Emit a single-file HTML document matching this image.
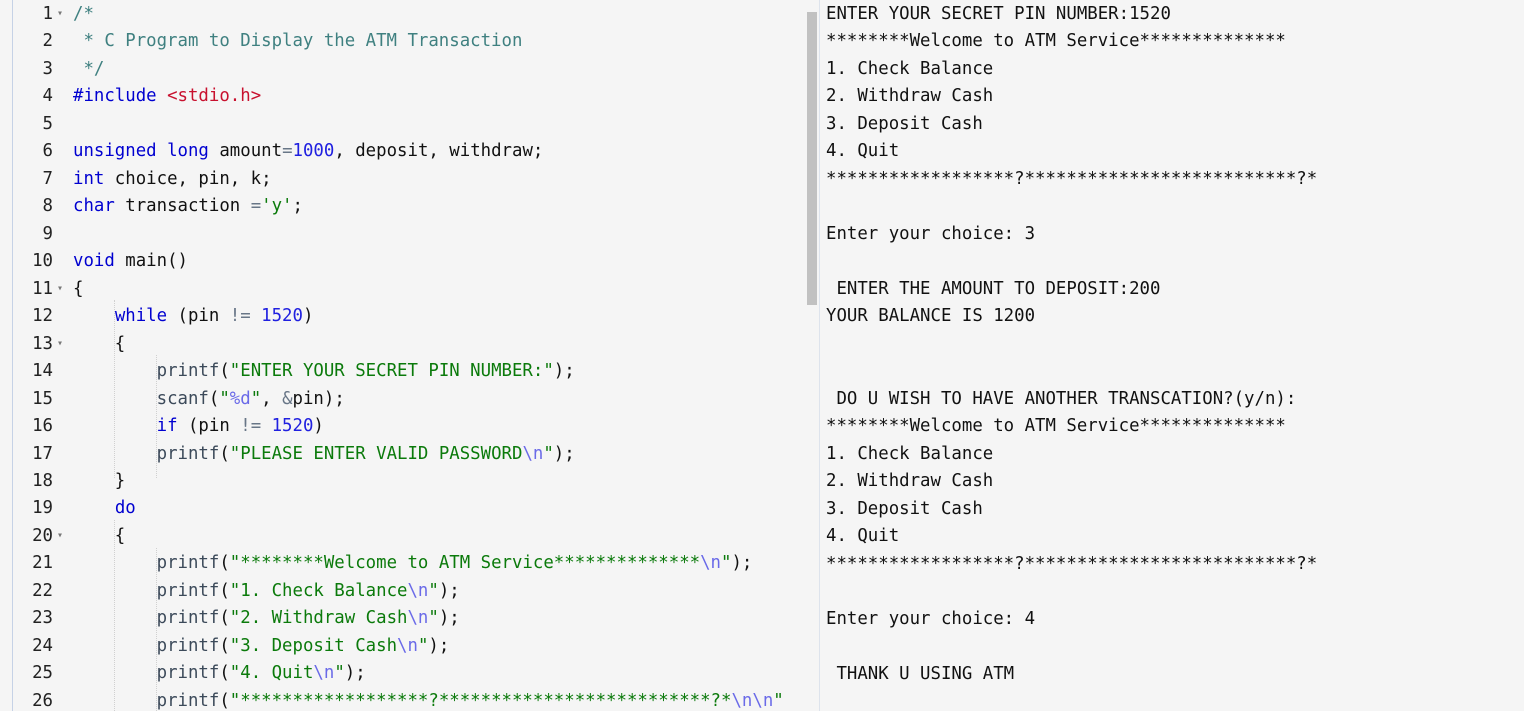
<!DOCTYPE html>
<html><head><meta charset="utf-8"><style>
html,body{margin:0;padding:0;width:1524px;height:711px;overflow:hidden;background:#f5f5f5}
body{font-family:"DejaVu Sans Mono","Liberation Mono",monospace;font-size:17.36px;position:relative}
.l{position:absolute;left:0;width:805px;height:711px;background:#f5f5f5;border-left:1px solid #c6d2e6;left:12px}
.ln{position:absolute;left:0;width:40px;text-align:right;color:#222}
.code{position:absolute;left:60px;white-space:pre;color:#111}
.row{height:27.48px;line-height:27.48px}
.f{position:absolute;left:44px;font-size:10px;color:#777;line-height:10px}
.k{color:#0000d0}.c{color:#3f8080}.s{color:#0b7a0b}.n{color:#2020e0}.o{color:#687687}.r{color:#c8102e}.e{color:#6a6ae8}.p{color:#3c4a5a}
.g{position:absolute;width:0;border-left:1px dotted #d0d0d0}
.sb{position:absolute;left:807px;top:0;width:11px;height:711px;background:#f5f5f5}
.th{position:absolute;left:807px;top:12px;width:10px;height:293px;background:#c1c1c1}
.dv{position:absolute;left:819px;top:0;width:1px;height:711px;background:#dde3ec}
.out{position:absolute;left:826px;top:1px;white-space:pre;color:#111;line-height:27.48px}
</style></head><body>
<div class="l">
<div class="g" style="left:101px;top:300px;height:178px"></div>
<div class="g" style="left:143px;top:355px;height:123px"></div>
<div class="g" style="left:101px;top:520px;height:191px"></div>
<div class="g" style="left:143px;top:548px;height:163px"></div>
<div style="position:absolute;top:1px;left:0;width:805px">
<div class="ln">
<div class="row">1</div><div class="row">2</div><div class="row">3</div><div class="row">4</div><div class="row">5</div><div class="row">6</div><div class="row">7</div><div class="row">8</div><div class="row">9</div><div class="row">10</div><div class="row">11</div><div class="row">12</div><div class="row">13</div><div class="row">14</div><div class="row">15</div><div class="row">16</div><div class="row">17</div><div class="row">18</div><div class="row">19</div><div class="row">20</div><div class="row">21</div><div class="row">22</div><div class="row">23</div><div class="row">24</div><div class="row">25</div><div class="row">26</div>
</div>
<div class="f" style="top:8px">▾</div>
<div class="f" style="top:283px">▾</div>
<div class="f" style="top:338px">▾</div>
<div class="f" style="top:530px">▾</div>
<div class="code"><div class="row"><span class="c">/*</span></div><div class="row"><span class="c"> * C Program to Display the ATM Transaction</span></div><div class="row"><span class="c"> */</span></div><div class="row"><span class="k">#include</span> <span class="r">&lt;stdio.h&gt;</span></div><div class="row"> </div><div class="row"><span class="k">unsigned</span> <span class="k">long</span> amount<span class="o">=</span><span class="n">1000</span>, deposit, withdraw;</div><div class="row"><span class="k">int</span> choice, pin, k;</div><div class="row"><span class="k">char</span> transaction <span class="o">=</span><span class="s">'y'</span>;</div><div class="row"> </div><div class="row"><span class="k">void</span> main()</div><div class="row">{</div><div class="row">    <span class="k">while</span> (pin <span class="o">!=</span> <span class="n">1520</span>)</div><div class="row">    {</div><div class="row">        <span class="p">printf</span>(<span class="s">"ENTER YOUR SECRET PIN NUMBER:"</span>);</div><div class="row">        <span class="p">scanf</span>(<span class="s">"<span class="e">%d</span>"</span>, <span class="o">&amp;</span>pin);</div><div class="row">        <span class="k">if</span> (pin <span class="o">!=</span> <span class="n">1520</span>)</div><div class="row">        <span class="p">printf</span>(<span class="s">"PLEASE ENTER VALID PASSWORD<span class="e">\n</span>"</span>);</div><div class="row">    }</div><div class="row">    <span class="k">do</span></div><div class="row">    {</div><div class="row">        <span class="p">printf</span>(<span class="s">"********Welcome to ATM Service**************<span class="e">\n</span>"</span>);</div><div class="row">        <span class="p">printf</span>(<span class="s">"1. Check Balance<span class="e">\n</span>"</span>);</div><div class="row">        <span class="p">printf</span>(<span class="s">"2. Withdraw Cash<span class="e">\n</span>"</span>);</div><div class="row">        <span class="p">printf</span>(<span class="s">"3. Deposit Cash<span class="e">\n</span>"</span>);</div><div class="row">        <span class="p">printf</span>(<span class="s">"4. Quit<span class="e">\n</span>"</span>);</div><div class="row">        <span class="p">printf</span>(<span class="s">"******************?**************************?*<span class="e">\n\n</span>"</span></div></div>
</div>
</div>
<div class="sb"></div><div class="th"></div><div class="dv"></div>
<div class="out">ENTER YOUR SECRET PIN NUMBER:1520
********Welcome to ATM Service**************
1. Check Balance
2. Withdraw Cash
3. Deposit Cash
4. Quit
******************?**************************?*

Enter your choice: 3

 ENTER THE AMOUNT TO DEPOSIT:200
YOUR BALANCE IS 1200


 DO U WISH TO HAVE ANOTHER TRANSCATION?(y/n):
********Welcome to ATM Service**************
1. Check Balance
2. Withdraw Cash
3. Deposit Cash
4. Quit
******************?**************************?*

Enter your choice: 4

 THANK U USING ATM</div>
</body></html>
